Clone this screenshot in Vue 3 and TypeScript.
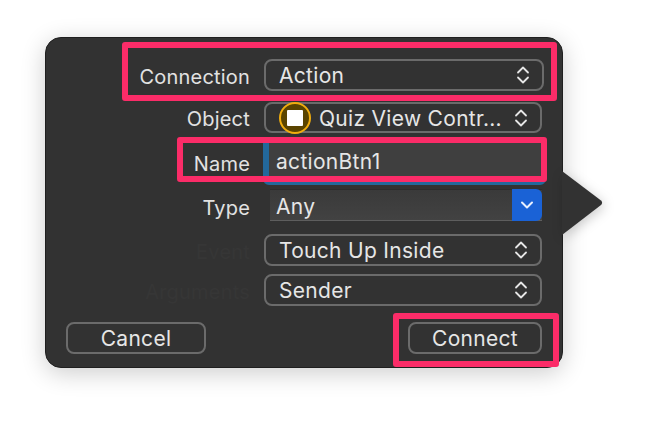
<script setup lang="ts">
const faint = { event: "Event", args: "Arguments" };
</script>

<template>
  <div class="page">
    <div class="panel">
      <div class="row row-connection">
        <label class="label">Connection</label>
        <div class="select wide">
          <span class="value">Action</span>
          <svg class="updown" viewBox="0 0 14 20" fill="none" stroke="currentColor" stroke-width="1.8" stroke-linecap="round" stroke-linejoin="round"><path d="M2 7.5 7 2.5l5 5" /><path d="M2 12.5l5 5 5-5" /></svg>
        </div>
      </div>

      <div class="row row-object">
        <label class="label">Object</label>
        <div class="select short">
          <span class="cube"><span class="cube-inner"></span></span>
          <span class="value">Quiz View Contr...</span>
          <svg class="updown" viewBox="0 0 14 20" fill="none" stroke="currentColor" stroke-width="1.8" stroke-linecap="round" stroke-linejoin="round"><path d="M2 7.5 7 2.5l5 5" /><path d="M2 12.5l5 5 5-5" /></svg>
        </div>
      </div>

      <div class="row row-name">
        <label class="label">Name</label>
        <div class="name-input">actionBtn1</div>
      </div>

      <div class="row row-type">
        <label class="label">Type</label>
        <div class="combo">
          <span class="combo-text">Any</span>
          <span class="combo-btn">
            <svg viewBox="0 0 14 10" fill="none" stroke="currentColor" stroke-width="2" stroke-linecap="round" stroke-linejoin="round"><path d="M2 2.5 7 7.5l5-5" /></svg>
          </span>
        </div>
      </div>

      <div class="row row-event">
        <label class="label hidden-label">{{ faint.event }}</label>
        <div class="select short">
          <span class="value">Touch Up Inside</span>
          <svg class="updown" viewBox="0 0 14 20" fill="none" stroke="currentColor" stroke-width="1.8" stroke-linecap="round" stroke-linejoin="round"><path d="M2 7.5 7 2.5l5 5" /><path d="M2 12.5l5 5 5-5" /></svg>
        </div>
      </div>

      <div class="row row-args">
        <label class="label hidden-label">{{ faint.args }}</label>
        <div class="select short">
          <span class="value">Sender</span>
          <svg class="updown" viewBox="0 0 14 20" fill="none" stroke="currentColor" stroke-width="1.8" stroke-linecap="round" stroke-linejoin="round"><path d="M2 7.5 7 2.5l5 5" /><path d="M2 12.5l5 5 5-5" /></svg>
        </div>
      </div>

      <div class="actions">
        <button class="btn cancel">Cancel</button>
        <button class="btn connect">Connect</button>
      </div>

      <svg class="arrow" viewBox="0 0 41 64"><path d="M0 0 39 29.5a3 3 0 0 1 0 4.6L0 64Z" /></svg>

      <div class="mark mark-connection"></div>
      <div class="mark mark-name"></div>
      <div class="mark mark-connect"></div>
    </div>
  </div>
</template>

<style>
html,
body {
  margin: 0;
  background: #fff;
}
</style>

<style scoped>
.page {
  width: 648px;
  height: 422px;
  padding: 37px 0 0 45px;
  box-sizing: border-box;
  overflow: hidden;
  font-family: Inter, "Liberation Sans", sans-serif;
}

.panel {
  position: relative;
  width: 518px;
  height: 331px;
  box-sizing: border-box;
  padding-top: 21px;
  background: #323232;
  border-radius: 16px;
  border: 1px solid #1f1f1f;
  box-shadow: 0 5px 24px rgba(0, 0, 0, 0.2);
}

.row {
  display: grid;
  grid-template-columns: 204px 278px;
  column-gap: 14px;
  align-items: center;
}

.row-object {
  margin-top: 11px;
}

.row-name {
  margin-top: 9px;
}

.row-type {
  margin-top: 4px;
}

.row-event {
  margin-top: 13px;
}

.row-args {
  margin-top: 8px;
}

.label {
  text-align: right;
  font-size: 20px;
  letter-spacing: 0.2px;
  color: #e2e2e2;
  padding-top: 3px;
}

.row-name .label {
  padding-top: 0;
}

.row-type .label {
  padding-top: 6px;
}

.hidden-label {
  color: #363636;
}

.select {
  display: flex;
  align-items: center;
  box-sizing: border-box;
  height: 32px;
  padding: 0 12px 0 13px;
  border: 2px solid #6b6b6b;
  border-radius: 8px;
  font-size: 21px;
  letter-spacing: 0.3px;
  color: #e6e6e6;
}

.select.wide {
  width: 280px;
}

.row-object .select {
  height: 31px;
}

.value {
  flex: 1;
  padding-top: 1px;
  white-space: nowrap;
}

.updown {
  width: 14px;
  height: 20px;
  color: #e6e6e6;
}

.cube {
  display: flex;
  align-items: center;
  justify-content: center;
  box-sizing: border-box;
  flex: none;
  width: 32px;
  height: 32px;
  margin-right: 8px;
  border: 2px solid #f0ad0e;
  border-radius: 50%;
  background: #5a4400;
}

.cube-inner {
  width: 16px;
  height: 16px;
  background: #fff;
  border-radius: 1px;
}

.name-input {
  box-sizing: border-box;
  width: 283px;
  height: 43px;
  margin-left: -1px;
  padding: 6px 0 0 7px;
  background: #3f3f3f;
  border: 1px solid #23689b;
  border-left: 6px solid #23689b;
  border-bottom: 3px solid #23689b;
  border-radius: 0 0 6px 6px;
  font-size: 21px;
  letter-spacing: 0.3px;
  color: #e6e6e6;
}

.combo {
  display: flex;
  width: 272px;
  height: 32px;
  margin-left: 6px;
  background: linear-gradient(#3a3a3a, #424242);
  border-top: 1px solid #2c2c2c;
  border-bottom: 1px solid #5e5e5e;
  box-sizing: border-box;
}

.combo-text {
  flex: 1;
  padding: 3px 0 0 6px;
  font-size: 21px;
  letter-spacing: 0.3px;
  color: #e6e6e6;
  line-height: 27px;
}

.combo-btn {
  display: flex;
  align-items: center;
  justify-content: center;
  width: 30px;
  height: 32px;
  margin-top: -1px;
  background: #1a62d6;
  border-radius: 0 6px 6px 0;
  color: #e8f0ff;
}

.combo-btn svg {
  width: 14px;
  height: 10px;
}

.actions {
  display: flex;
  justify-content: space-between;
  width: 476px;
  margin: 16px 0 0 20px;
}

.btn {
  box-sizing: border-box;
  height: 32px;
  padding: 1px 0 0;
  background: transparent;
  border: 2px solid #6b6b6b;
  border-radius: 8px;
  font-family: inherit;
  font-size: 21px;
  letter-spacing: 0.3px;
  color: #e6e6e6;
}

.cancel {
  width: 140px;
}

.connect {
  width: 134px;
}

.arrow {
  position: absolute;
  left: 516px;
  top: 133px;
  width: 41px;
  height: 64px;
  fill: #323232;
  filter: drop-shadow(2px 3px 6px rgba(0, 0, 0, 0.2));
}

.mark {
  position: absolute;
  box-sizing: border-box;
  border: 6px solid #fb2c68;
  border-radius: 3px;
}

.mark-connection {
  left: 76px;
  top: 4px;
  width: 435px;
  height: 59px;
}

.mark-name {
  left: 131px;
  top: 99px;
  width: 370px;
  height: 45px;
}

.mark-connect {
  left: 347px;
  top: 275px;
  width: 166px;
  height: 54px;
}
</style>
